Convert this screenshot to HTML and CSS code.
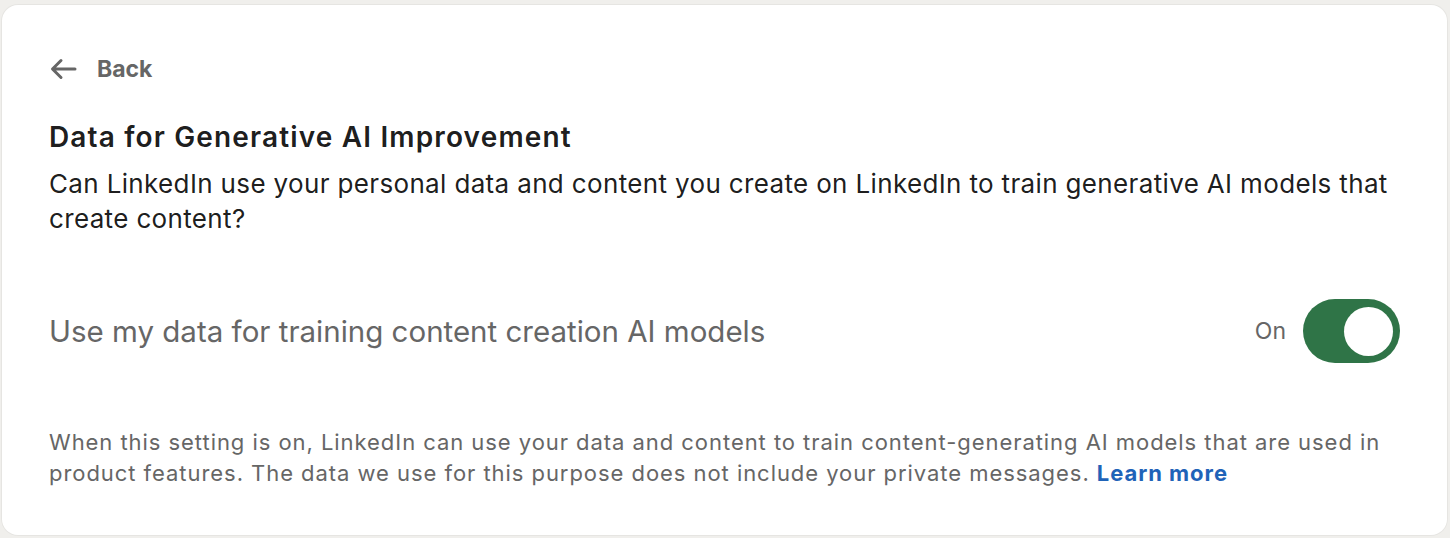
FILE: index.html
```html
<!DOCTYPE html>
<html lang="en">
<head>
<meta charset="utf-8">
<title>Data for Generative AI Improvement</title>
<link rel="stylesheet" href="styles.css">
</head>
<body>
<main class="card">
  <a class="back" href="#">
    <svg class="back-icon" viewBox="0 0 28 24" width="28" height="24" aria-hidden="true">
      <path d="M26 12H4M12 3.5L3.5 12 12 20.5" fill="none" stroke="#666" stroke-width="3" stroke-linecap="round" stroke-linejoin="round"/>
    </svg>
    <span>Back</span>
  </a>
  <h1 class="title">Data for Generative AI Improvement</h1>
  <p class="question">Can LinkedIn use your personal data and content you create on LinkedIn to train generative AI models that create content?</p>
  <div class="setting">
    <span class="setting-label">Use my data for training content creation AI models</span>
    <div class="toggle-wrap">
      <span class="state">On</span>
      <span class="toggle"><span class="knob"></span></span>
    </div>
  </div>
  <p class="note">When this setting is on, LinkedIn can use your data and content to train content-generating AI models that are used in product features. The data we use for this purpose does not include your private messages. <a class="link" href="#">Learn more</a></p>
</main>
</body>
</html>
```
FILE: styles.css
```css
html, body {
  margin: 0;
  padding: 0;
  background: #f0efec;
}
body {
  padding: 5px 3px 3px 2px;
  font-family: Inter, "Noto Sans", "Liberation Sans", sans-serif;
  color: rgba(0, 0, 0, 0.9);
}
.card {
  background: #fff;
  border-radius: 16px;
  height: 530px;
  box-sizing: border-box;
  padding: 44px 47px 0 47px;
  box-shadow: 0 0 0 1px rgba(0,0,0,0.04);
}
.back {
  display: flex;
  align-items: center;
  gap: 20px;
  color: #666;
  text-decoration: none;
  font-weight: 700;
  font-size: 23px;
  height: 40px;
}
.back-icon {
  display: block;
}
.title {
  margin: 30px 0 0 0;
  font-size: 28px;
  font-weight: 600;
  letter-spacing: 1.15px;
  line-height: 36px;
  color: rgba(0,0,0,0.9);
}
.question {
  margin: 11px 0 0 0;
  font-size: 26px;
  letter-spacing: 0.35px;
  line-height: 35px;
}
.setting {
  display: flex;
  align-items: center;
  justify-content: space-between;
  margin-top: 63px;
}
.setting-label {
  font-size: 29.5px;
  color: #666;
}
.toggle-wrap {
  display: flex;
  align-items: center;
  gap: 17px;
}
.state {
  font-size: 23px;
  color: #666;
}
.toggle {
  width: 97px;
  height: 64px;
  border-radius: 32px;
  background: #2f7447;
  display: flex;
  align-items: center;
  justify-content: flex-end;
  padding-right: 7px;
  box-sizing: border-box;
}
.knob {
  width: 49px;
  height: 49px;
  border-radius: 50%;
  background: #fff;
}
.note {
  margin: 64px 0 0 0;
  font-size: 22px;
  letter-spacing: 0.95px;
  line-height: 31px;
  color: #666;
}
.link {
  color: #1f63b8;
  font-weight: 700;
  text-decoration: none;
}
```
